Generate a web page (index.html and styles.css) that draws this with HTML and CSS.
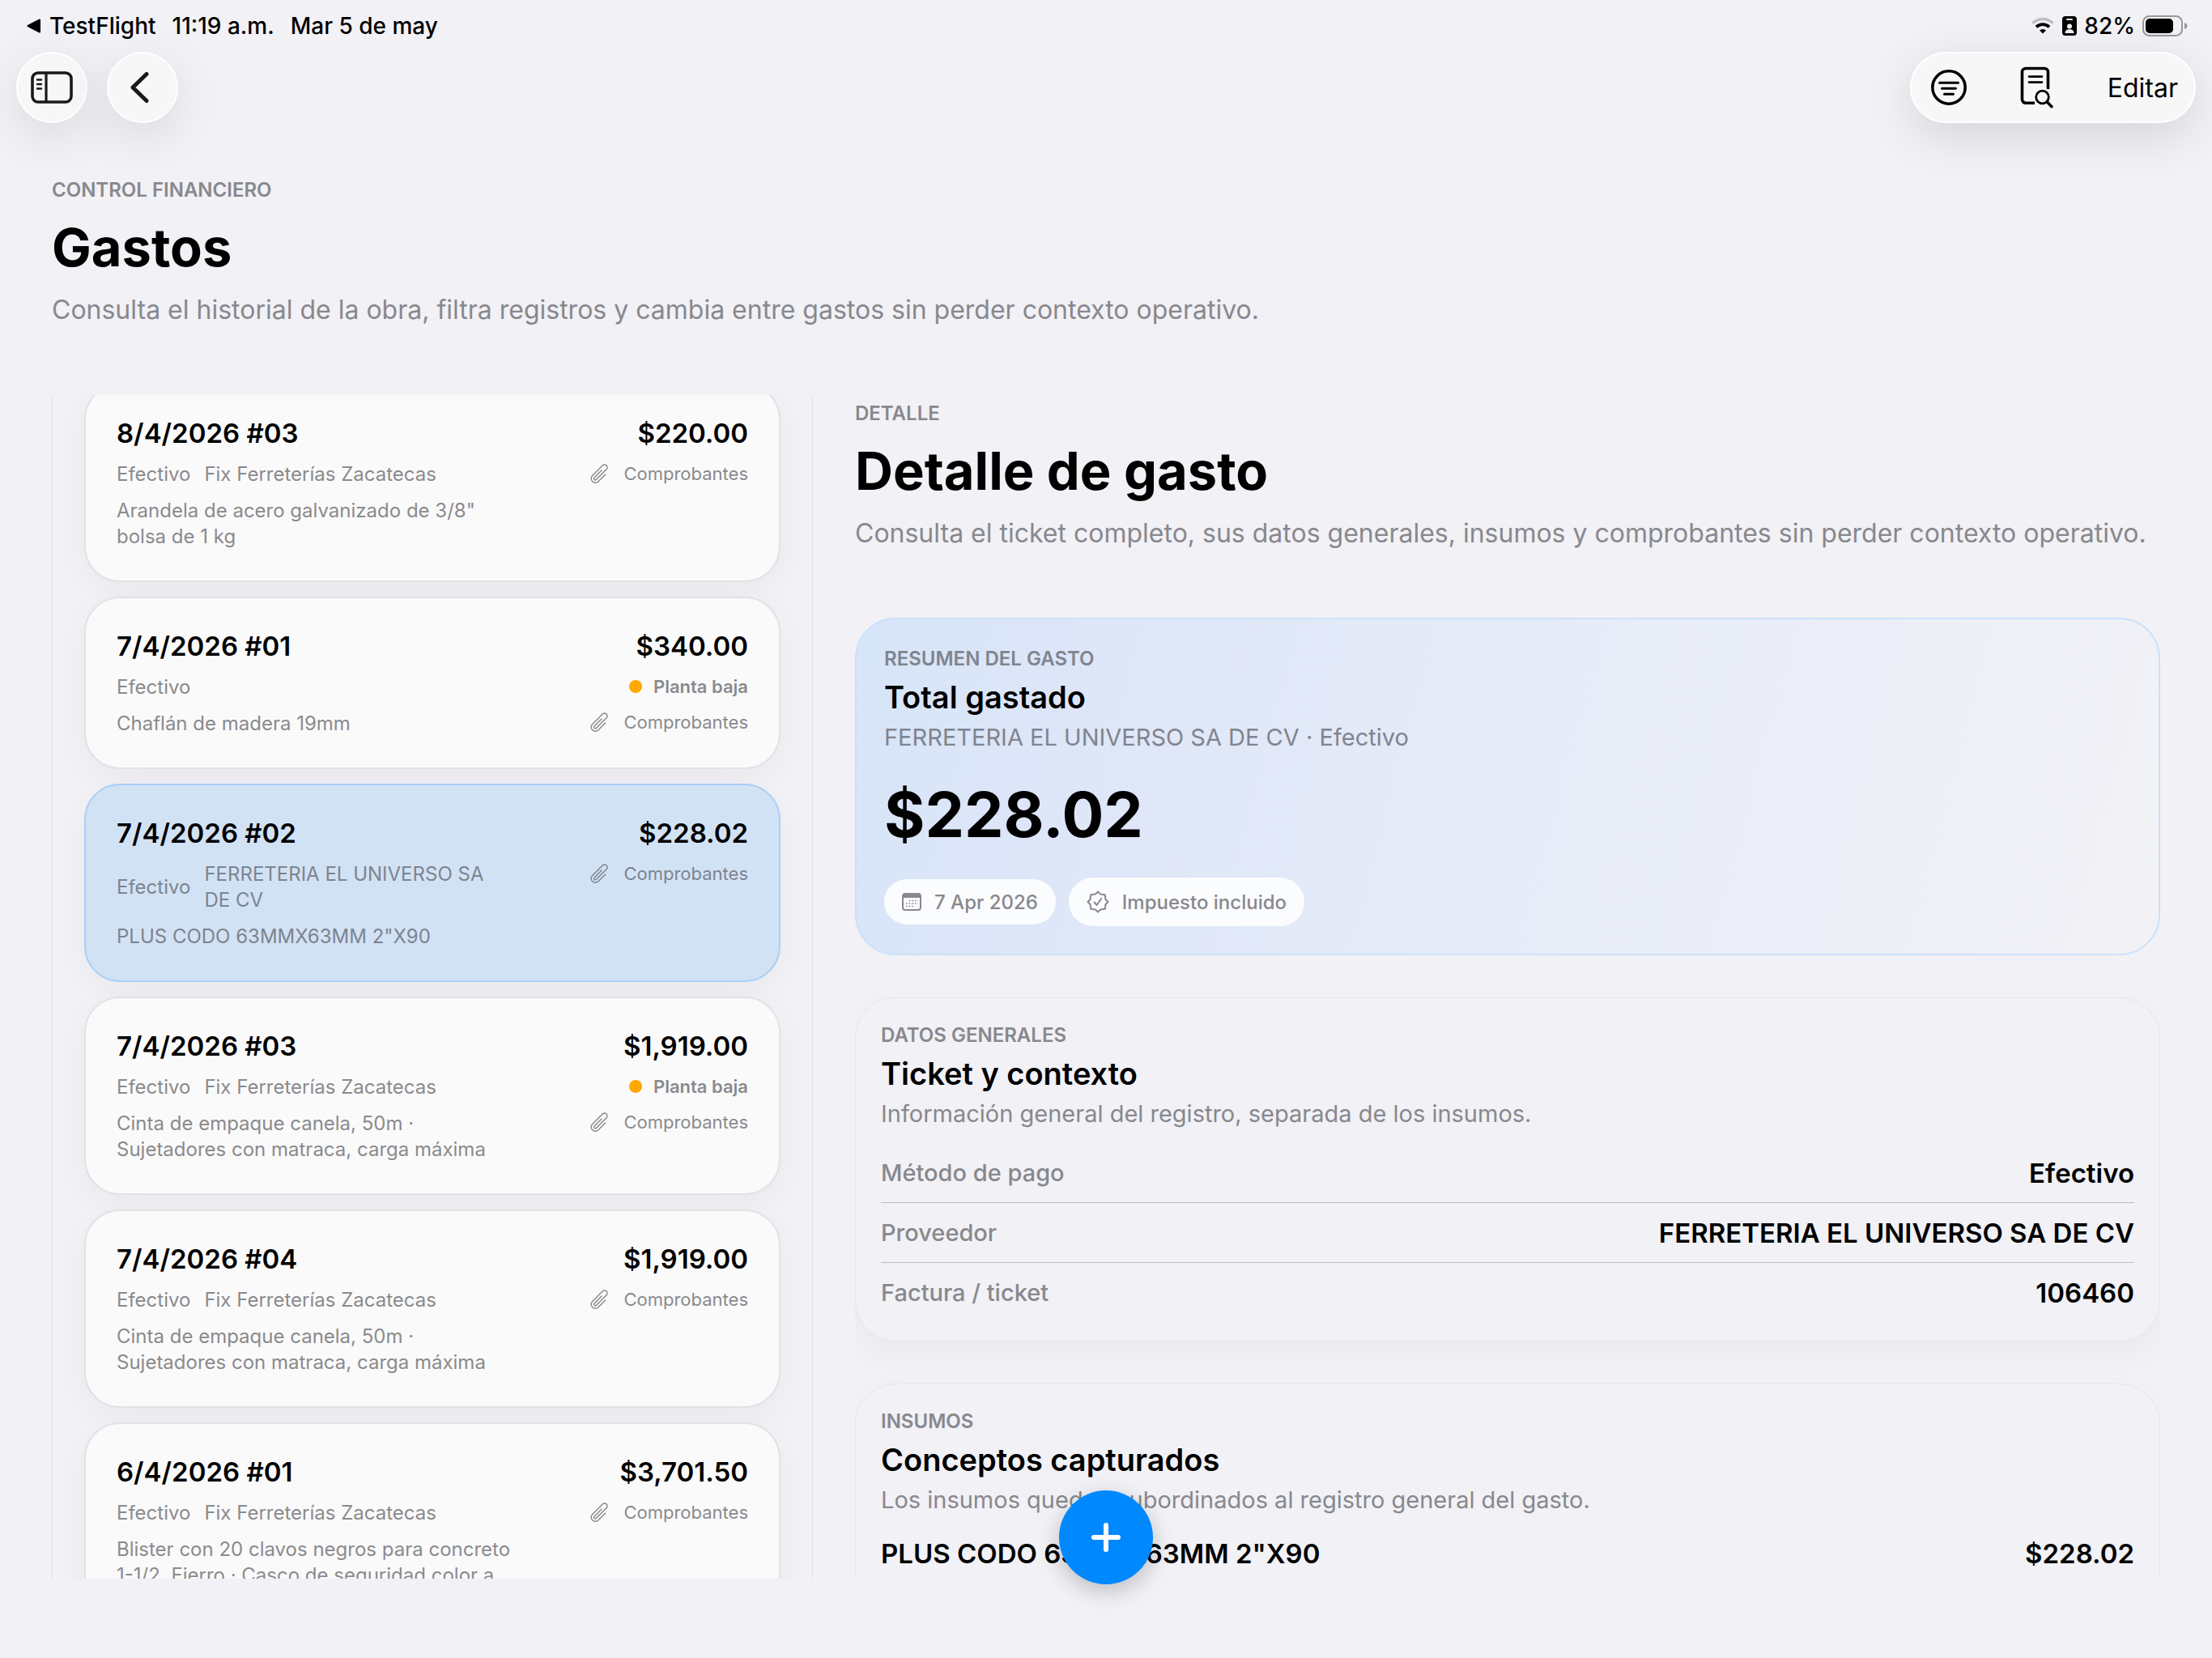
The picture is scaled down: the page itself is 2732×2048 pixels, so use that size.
FILE: index.html
```html
<!DOCTYPE html>
<html lang="es-MX">
<head>
  <meta charset="UTF-8">
  <meta name="viewport" content="width=device-width, initial-scale=1.0">
  <title>Gastos</title>
  <link rel="stylesheet" href="styles.css">
</head>
<body>

  <!-- Shared icons -->
  <svg class="sprite" aria-hidden="true">
    <symbol id="icon-clip" viewBox="2.2 1.4 18.8 21">
      <path d="M18.375 12.739l-7.693 7.693a4.5 4.5 0 0 1-6.364-6.364l10.94-10.94A3 3 0 1 1 19.5 7.372L8.552 18.320M14.250 8.379l-7.810 7.810a1.500 1.500 0 0 0 2.112 2.130" fill="none" stroke="currentColor" stroke-width="1.3" stroke-linecap="round" stroke-linejoin="round"/>
    </symbol>
  </svg>

  <div class="status-bar">
    <div class="status-group">
      <a href="#" class="status-back"><svg width="18" height="18" viewBox="0 0 18 18"><path d="M16 1.5v15L1.5 9z" fill="currentColor" stroke="currentColor" stroke-width="2" stroke-linejoin="round"/></svg>TestFlight</a>
      <span>11:19 a.m.</span>
      <span>Mar 5 de may</span>
    </div>
    <div class="status-icons">
      <svg width="30" height="22" viewBox="0 0 30 22" fill="none">
        <path d="M2.4 7.6a18 18 0 0 1 25.2 0" stroke="#bfbec4" stroke-width="3.4"/>
        <path d="M7 12.4a11.5 11.5 0 0 1 16 0" stroke="#000" stroke-width="3.6"/>
        <path d="M15 20.4 11 16.6a5.8 5.8 0 0 1 8 0z" fill="#000"/>
      </svg>
      <svg width="18" height="24" viewBox="0 0 18 24">
        <rect width="18" height="24" rx="4" fill="#000"/>
        <rect x="5" y="3" width="8" height="2" rx="1" fill="#f1f1f6"/>
        <circle cx="9" cy="12.5" r="3" fill="#f1f1f6"/>
        <path d="M3.5 21c0-3.5 2.5-4.8 5.5-4.8s5.5 1.3 5.5 4.8z" fill="#f1f1f6"/>
      </svg>
      <span>82%</span>
      <svg width="56" height="26" viewBox="0 0 56 26">
        <rect x="1" y="1" width="48" height="24" rx="7.5" fill="none" stroke="#98979c" stroke-width="2"/>
        <rect x="4" y="4" width="34" height="18" rx="5" fill="#000"/>
        <path d="M52 9c2.5.8 3.5 2.4 3.5 4s-1 3.2-3.5 4z" fill="#98979c"/>
      </svg>
    </div>
  </div>

  <nav class="toolbar">
    <div class="toolbar-left">
      <button type="button" class="round-btn" aria-label="Barra lateral">
        <svg width="52" height="40" viewBox="0 0 52 40" fill="none" stroke="currentColor" stroke-linecap="round">
          <rect x="2" y="2" width="48" height="36" rx="7" stroke-width="3.6"/>
          <path d="M19 3v34" stroke-width="3.2"/>
          <path d="M8 10.5h5M8 16h5M8 21.5h5" stroke-width="2.4"/>
        </svg>
      </button>
      <button type="button" class="round-btn" aria-label="Atrás">
        <svg width="30" height="40" viewBox="0 0 30 40" fill="none" stroke="currentColor" stroke-width="5" stroke-linecap="round" stroke-linejoin="round"><path d="M20 3.5 3 20 20 36.5"/></svg>
      </button>
    </div>
    <div class="toolbar-right">
      <button type="button" class="tool-btn" aria-label="Filtrar">
        <svg width="44" height="44" viewBox="0 0 44 44" fill="none" stroke="currentColor" stroke-linecap="round">
          <circle cx="22" cy="22" r="20.2" stroke-width="3.6"/>
          <path d="M10.5 16.3h23M13.5 23.2h17M16.5 30.2h11" stroke-width="3"/>
        </svg>
      </button>
      <button type="button" class="tool-btn" aria-label="Buscar documento">
        <svg width="42" height="52" viewBox="0 0 42 52" fill="none" stroke="currentColor" stroke-linecap="round">
          <path d="M18 45.2H7a4.5 4.5 0 0 1-4.5-4.5V7A4.5 4.5 0 0 1 7 2.5h23A4.5 4.5 0 0 1 34.5 7v21" stroke-width="3.6" stroke-linecap="butt"/>
          <path d="M11 12.6h16M11 19.6h16" stroke-width="2.6"/>
          <circle cx="27.5" cy="38" r="7.8" stroke-width="2.8"/>
          <path d="M33.4 44l5.6 5.8" stroke-width="3.4"/>
        </svg>
      </button>
      <button type="button" class="tool-btn">Editar</button>
    </div>
  </nav>

  <header class="page-head">
    <p class="eyebrow">CONTROL FINANCIERO</p>
    <h1>Gastos</h1>
    <p class="lead">Consulta el historial de la obra, filtra registros y cambia entre gastos sin perder contexto operativo.</p>
  </header>

  <main class="columns">

    <!-- Expense list -->
    <section class="list-panel" aria-label="Historial de gastos">
      <ul class="expense-list">
        <li class="expense">
          <div class="expense-info">
            <h3>8/4/2026 #03</h3>
            <p class="expense-meta"><span>Efectivo</span><span>Fix Ferreterías Zacatecas</span></p>
            <p>Arandela de acero galvanizado de 3/8" bolsa de 1 kg</p>
          </div>
          <div class="expense-side">
            <strong>$220.00</strong>
            <a href="#" class="receipts"><svg width="22" height="24"><use href="#icon-clip"/></svg>Comprobantes</a>
          </div>
        </li>
        <li class="expense">
          <div class="expense-info">
            <h3>7/4/2026 #01</h3>
            <p class="expense-meta"><span>Efectivo</span></p>
            <p>Chaflán de madera 19mm</p>
          </div>
          <div class="expense-side">
            <strong>$340.00</strong>
            <span class="zone">Planta baja</span>
            <a href="#" class="receipts"><svg width="22" height="24"><use href="#icon-clip"/></svg>Comprobantes</a>
          </div>
        </li>
        <li class="expense selected">
          <div class="expense-info">
            <h3>7/4/2026 #02</h3>
            <p class="expense-meta"><span>Efectivo</span><span>FERRETERIA EL UNIVERSO SA DE CV</span></p>
            <p>PLUS CODO 63MMX63MM 2"X90</p>
          </div>
          <div class="expense-side">
            <strong>$228.02</strong>
            <a href="#" class="receipts"><svg width="22" height="24"><use href="#icon-clip"/></svg>Comprobantes</a>
          </div>
        </li>
        <li class="expense">
          <div class="expense-info">
            <h3>7/4/2026 #03</h3>
            <p class="expense-meta"><span>Efectivo</span><span>Fix Ferreterías Zacatecas</span></p>
            <p>Cinta de empaque canela, 50m · Sujetadores con matraca, carga máxima</p>
          </div>
          <div class="expense-side">
            <strong>$1,919.00</strong>
            <span class="zone">Planta baja</span>
            <a href="#" class="receipts"><svg width="22" height="24"><use href="#icon-clip"/></svg>Comprobantes</a>
          </div>
        </li>
        <li class="expense">
          <div class="expense-info">
            <h3>7/4/2026 #04</h3>
            <p class="expense-meta"><span>Efectivo</span><span>Fix Ferreterías Zacatecas</span></p>
            <p>Cinta de empaque canela, 50m · Sujetadores con matraca, carga máxima</p>
          </div>
          <div class="expense-side">
            <strong>$1,919.00</strong>
            <a href="#" class="receipts"><svg width="22" height="24"><use href="#icon-clip"/></svg>Comprobantes</a>
          </div>
        </li>
        <li class="expense">
          <div class="expense-info">
            <h3>6/4/2026 #01</h3>
            <p class="expense-meta"><span>Efectivo</span><span>Fix Ferreterías Zacatecas</span></p>
            <p>Blister con 20 clavos negros para concreto 1-1/2. Fierro · Casco de seguridad color a…</p>
          </div>
          <div class="expense-side">
            <strong>$3,701.50</strong>
            <a href="#" class="receipts"><svg width="22" height="24"><use href="#icon-clip"/></svg>Comprobantes</a>
          </div>
        </li>
      </ul>
    </section>

    <!-- Selected expense -->
    <section class="detail">
      <header class="detail-head">
        <p class="eyebrow">DETALLE</p>
        <h2 class="title">Detalle de gasto</h2>
        <p class="lead">Consulta el ticket completo, sus datos generales, insumos y comprobantes sin perder contexto operativo.</p>
      </header>

      <article class="card summary">
        <p class="eyebrow">RESUMEN DEL GASTO</p>
        <h3>Total gastado</h3>
        <p class="card-sub">FERRETERIA EL UNIVERSO SA DE CV · Efectivo</p>
        <p class="total">$228.02</p>
        <div class="chips">
          <span class="chip">
            <svg width="24" height="22" viewBox="0 0 24 22">
              <rect x="1" y="1" width="22" height="20" rx="3" fill="none" stroke="currentColor" stroke-width="2"/>
              <path d="M1 3a2 2 0 0 1 2-2h18a2 2 0 0 1 2 2v3H1z" fill="currentColor"/>
              <path d="M9 9.5h11M5 13h15M5 16.5h11" stroke="currentColor" stroke-width="1.6" stroke-dasharray="1.6 2"/>
            </svg>
            7 Apr 2026
          </span>
          <span class="chip chip-tall">
            <svg width="28" height="28" viewBox="0 0 28 28" fill="none" stroke="currentColor" stroke-width="2" stroke-linecap="round" stroke-linejoin="round">
              <path d="M14 1.5 17.2 4.6 22.8 5.2 23.4 10.8 26.5 14 23.4 17.2 22.8 22.8 17.2 23.4 14 26.5 10.8 23.4 5.2 22.8 4.6 17.2 1.5 14 4.6 10.8 5.2 5.2 10.8 4.6z"/>
              <path d="M9.5 14.5 12.7 18 18.3 9.8"/>
            </svg>
            Impuesto incluido
          </span>
        </div>
      </article>

      <article class="card">
        <p class="eyebrow">DATOS GENERALES</p>
        <h3>Ticket y contexto</h3>
        <p class="card-sub">Información general del registro, separada de los insumos.</p>
        <dl class="rows">
          <div class="row"><dt>Método de pago</dt><dd>Efectivo</dd></div>
          <div class="row"><dt>Proveedor</dt><dd>FERRETERIA EL UNIVERSO SA DE CV</dd></div>
          <div class="row"><dt>Factura / ticket</dt><dd>106460</dd></div>
        </dl>
      </article>

      <article class="card items-card">
        <p class="eyebrow">INSUMOS</p>
        <h3>Conceptos capturados</h3>
        <p class="card-sub">Los insumos quedan subordinados al registro general del gasto.</p>
        <div class="item"><span>PLUS CODO 63MMX63MM 2"X90</span><span>$228.02</span></div>
      </article>
    </section>
  </main>

  <button type="button" class="add-btn" aria-label="Agregar gasto">
    <svg width="40" height="40" viewBox="0 0 40 40" stroke="#fff" stroke-width="6" stroke-linecap="round"><path d="M20 5v30M5 20h30"/></svg>
  </button>

</body>
</html>
```
FILE: styles.css
```css
* {
  box-sizing: border-box;
}

body {
  margin: 0;
  height: 100vh;
  display: flex;
  flex-direction: column;
  overflow: hidden;
  background-color: #f1f1f6;
  color: #000;
  font-family: Inter, "Liberation Sans", sans-serif;
}

h1, h2, h3, p, ul, dl, dd {
  margin: 0;
  padding: 0;
}

a {
  color: inherit;
  text-decoration: none;
}

button {
  border: none;
  background: none;
  padding: 0;
  color: inherit;
  font-family: inherit;
  cursor: pointer;
}

svg {
  display: block;
  flex-shrink: 0;
}

.sprite {
  position: absolute;
  width: 0;
  height: 0;
}

/* Status bar */
.status-bar {
  display: flex;
  justify-content: space-between;
  align-items: center;
  height: 64px;
  padding: 0 30px 0 33px;
  font-size: 28px;
  font-weight: 500;
}

.status-group {
  display: flex;
  gap: 20px;
}

.status-back {
  display: flex;
  align-items: center;
  gap: 10px;
}

.status-icons {
  display: flex;
  align-items: center;
  gap: 9px;
}

/* Toolbar */
.toolbar {
  display: flex;
  justify-content: space-between;
  padding: 0 20px;
}

.toolbar-left {
  display: flex;
  gap: 24px;
}

.round-btn {
  display: flex;
  align-items: center;
  justify-content: center;
  width: 88px;
  height: 88px;
  border: 2px solid #fff;
  border-radius: 50%;
  background-color: #f7f7f7;
  color: #1a1a1c;
  box-shadow: 0 16px 60px rgba(0, 0, 0, 0.1);
}

.toolbar-right {
  display: flex;
  align-items: center;
  gap: 66px;
  height: 88px;
  padding: 0 20px 0 24px;
  border: 2px solid #fff;
  border-radius: 44px;
  background-color: #f7f7f7;
  box-shadow: 0 16px 60px rgba(0, 0, 0, 0.12);
}

.tool-btn {
  font-size: 32px;
}

/* Headings */
.page-head {
  padding: 68px 64px 83px;
}

.eyebrow {
  font-size: 24px;
  line-height: 30px;
  font-weight: 600;
  color: #88888d;
}

h1, .title {
  margin: 14px 0 13px;
  font-size: 65px;
  line-height: 84px;
  font-weight: 700;
}

.lead {
  font-size: 32px;
  line-height: 44px;
  color: #88888d;
}

/* Columns */
.columns {
  flex: 1;
  min-height: 0;
  display: grid;
  grid-template-columns: 235fr 403fr;
  gap: 52px;
  padding: 0 64px;
  margin-bottom: 98px;
}

.list-panel {
  overflow: hidden;
  border: solid #e3e2e8;
  border-width: 0 1px;
  padding: 0 39px;
}

.expense-list {
  display: flex;
  flex-direction: column;
  gap: 18px;
  margin-top: -14px;
  list-style: none;
}

.expense {
  display: flex;
  justify-content: space-between;
  padding: 38px;
  border: 2px solid #e2e1e5;
  border-radius: 44px;
  background-color: #fafafa;
  box-shadow: 0 12px 40px rgba(0, 0, 0, 0.04);
  font-size: 24px;
  line-height: 32px;
  color: #8a8a8e;
}

.expense.selected {
  border-color: #a8cff6;
  background-color: #d2e2f5;
  color: #7c848f;
}

.expense-info {
  display: flex;
  flex-direction: column;
  gap: 13px;
  width: 488px;
}

.expense h3,
.expense strong {
  font-size: 33px;
  line-height: 43px;
  font-weight: 600;
  color: #000;
}

.expense-meta {
  display: flex;
  align-items: center;
  gap: 17px;
}

.expense-side {
  display: flex;
  flex-direction: column;
  align-items: flex-end;
  gap: 12px;
  font-size: 22px;
}

.receipts,
.zone {
  display: flex;
  align-items: center;
}

.receipts {
  gap: 19px;
}

.zone {
  gap: 14px;
  font-weight: 600;
}

.zone::before {
  content: "";
  width: 16px;
  height: 16px;
  border-radius: 50%;
  background-color: #ffa800;
}

/* Detail */
.detail {
  overflow: hidden;
}

.detail-head {
  padding: 8px 0 82px;
}

.card {
  padding: 31px 31px 23px;
  margin-bottom: 52px;
  border: 1px solid #e7e6eb;
  border-radius: 50px;
  background-color: #f1f1f6;
  box-shadow: 0 16px 40px rgba(0, 0, 0, 0.04);
}

.card h3 {
  margin: 8px 0;
  font-size: 38px;
  line-height: 48px;
  font-weight: 600;
}

.card-sub {
  font-size: 29px;
  line-height: 36px;
  color: #88888d;
}

.summary {
  padding: 34px;
  border: 2px solid #cbe1f8;
  background: linear-gradient(105deg, #d6e5f8 0%, #dde6f8 16%, #e7ecf8 55%, #f2f2f6 100%);
  box-shadow: none;
}

.summary .eyebrow,
.summary .card-sub {
  color: #80848e;
}

.total {
  margin: 29px 0 30px;
  font-size: 77px;
  line-height: 96px;
  font-weight: 700;
}

.chips {
  display: flex;
  align-items: center;
  gap: 16px;
}

.chip {
  display: flex;
  align-items: center;
  gap: 16px;
  height: 56px;
  padding: 0 22px;
  border-radius: 30px;
  background-color: #fbfcfe;
  font-size: 24px;
  font-weight: 500;
  color: #88888d;
}

.chip-tall {
  height: 60px;
}

.rows {
  margin-top: 18px;
}

.row {
  display: flex;
  justify-content: space-between;
  align-items: center;
  height: 73px;
}

.row + .row {
  height: 74px;
  border-top: 1px solid #bdbdc2;
}

.row dt {
  font-size: 29px;
  font-weight: 500;
  color: #88888d;
}

.row dd {
  font-size: 33px;
  font-weight: 600;
}

.items-card {
  padding-bottom: 80px;
}

.item {
  display: flex;
  justify-content: space-between;
  margin-top: 22px;
  font-size: 33px;
  line-height: 52px;
  font-weight: 600;
}

/* Floating add button */
.add-btn {
  position: absolute;
  left: 50%;
  bottom: 91px;
  display: flex;
  align-items: center;
  justify-content: center;
  width: 116px;
  height: 116px;
  margin-left: -58px;
  border-radius: 50%;
  background-color: #0088ff;
  box-shadow: 0 8px 28px rgba(0, 0, 0, 0.22);
}
```
